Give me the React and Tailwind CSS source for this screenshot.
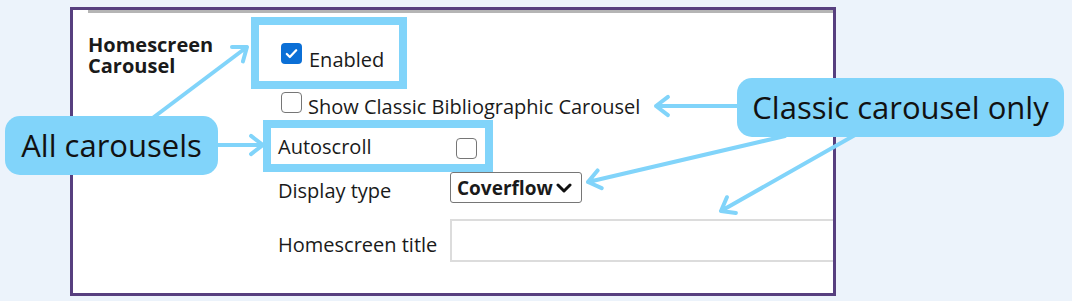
import React from 'react';

const BLUE = '#81d4fa';

// annotation arrows: [x1, y1, x2 (tip), y2]
const arrows = [
  [150, 120, 247, 47],
  [214, 145, 263, 145],
  [742, 106, 656, 106],
  [785, 136, 588, 182],
  [855, 135, 721, 211],
];

function arrowPath([x1, y1, x2, y2]) {
  const a = Math.atan2(y2 - y1, x2 - x1);
  const L = 15, s = 0.65;
  const p1 = [x2 - L * Math.cos(a - s), y2 - L * Math.sin(a - s)];
  const p2 = [x2 - L * Math.cos(a + s), y2 - L * Math.sin(a + s)];
  return `M${x1} ${y1}L${x2} ${y2}M${p1[0]} ${p1[1]}L${x2} ${y2}L${p2[0]} ${p2[1]}`;
}

function Checkbox({ checked }) {
  if (checked) {
    return (
      <div className="w-[21px] h-[21px] shrink-0 rounded-[4px] bg-[#0b6fd6] flex items-center justify-center">
        <svg width="15" height="15" viewBox="0 0 16 16">
          <path d="M3 8.5l3.2 3.2L13 4.5" fill="none" stroke="#fff" strokeWidth="2.4" strokeLinecap="round" strokeLinejoin="round" />
        </svg>
      </div>
    );
  }
  return <div className="w-[21px] h-[21px] shrink-0 rounded-[4px] border-[1.5px] border-[#767676] bg-white" />;
}

export default function App() {
  return (
    <div className="relative w-[1072px] h-[301px] bg-[#ecf3fb] overflow-hidden text-[#1a1a1a]" style={{ fontFamily: '"Open Sans", sans-serif' }}>
      <div className="ml-[70px] mt-[7px] w-[766px] h-[289px] border-[3px] border-[#573f7f] bg-white overflow-hidden">
        <div className="ml-[15px] h-[3px] bg-[#b5b5b5]" />
        <div className="flex">
          <div className="w-[178px] shrink-0 pl-[15px] pt-[21px] text-[20px] leading-[21px] font-bold">
            Homescreen<br />Carousel
          </div>
          <div className="flex-1 min-w-0 text-[20px] leading-[24px]">
            {/* Enabled */}
            <div className="mt-[4px] w-[156px] h-[72px] border-[8px] border-[#81d4fa] flex items-start pt-[18px] pl-[22px]">
              <Checkbox checked />
              <span className="ml-[7px] mt-[5px]">Enabled</span>
            </div>
            {/* Show classic */}
            <div className="flex items-start mt-[3px] pl-[30px]">
              <Checkbox />
              <span className="ml-[6px] mt-[3px]">Show Classic Bibliographic Carousel</span>
            </div>
            {/* Autoscroll */}
            <div className="ml-[12px] mt-[1px] w-[230px] h-[52px] border-[8px] border-[#81d4fa] flex items-start pt-[7px] pl-[7px] pr-[8px]">
              <span>Autoscroll</span>
              <div className="ml-auto mt-[3px]"><Checkbox /></div>
            </div>
            {/* Display type */}
            <div className="flex items-start">
              <div className="w-[199px] shrink-0 pl-[27px] pt-[7px]">Display type</div>
              <div className="w-[132px] h-[31px] border border-[#767676] rounded-[3px] flex items-center pl-[6px] pr-[9px] text-[19px] font-bold">
                <span>Coverflow</span>
                <svg className="ml-auto" width="16" height="10" viewBox="0 0 16 10">
                  <path d="M2 2l6 6 6-6" fill="none" stroke="#111" strokeWidth="3" strokeLinecap="round" strokeLinejoin="round" />
                </svg>
              </div>
            </div>
            {/* Homescreen title */}
            <div className="flex items-start mt-[16px]">
              <div className="w-[199px] shrink-0 pl-[27px] pt-[14px]">Homescreen title</div>
              <div className="w-[460px] h-[43px] shrink-0 border-2 border-[#dcdcdc] bg-white" />
            </div>
          </div>
        </div>
      </div>

      <svg className="absolute left-0 top-0" width="1072" height="301">
        {arrows.map((a, i) => (
          <path key={i} d={arrowPath(a)} fill="none" stroke={BLUE} strokeWidth="4" strokeLinecap="round" strokeLinejoin="round" />
        ))}
      </svg>

      <div className="absolute left-[5px] top-[116px] w-[213px] h-[59px] rounded-[15px] bg-[#81d4fa] flex items-center justify-center text-[31px] text-[#111]">
        All carousels
      </div>
      <div className="absolute left-[737px] top-[78px] w-[327px] h-[59px] rounded-[15px] bg-[#81d4fa] flex items-center justify-center text-[31px] text-[#111]">
        Classic carousel only
      </div>
    </div>
  );
}
